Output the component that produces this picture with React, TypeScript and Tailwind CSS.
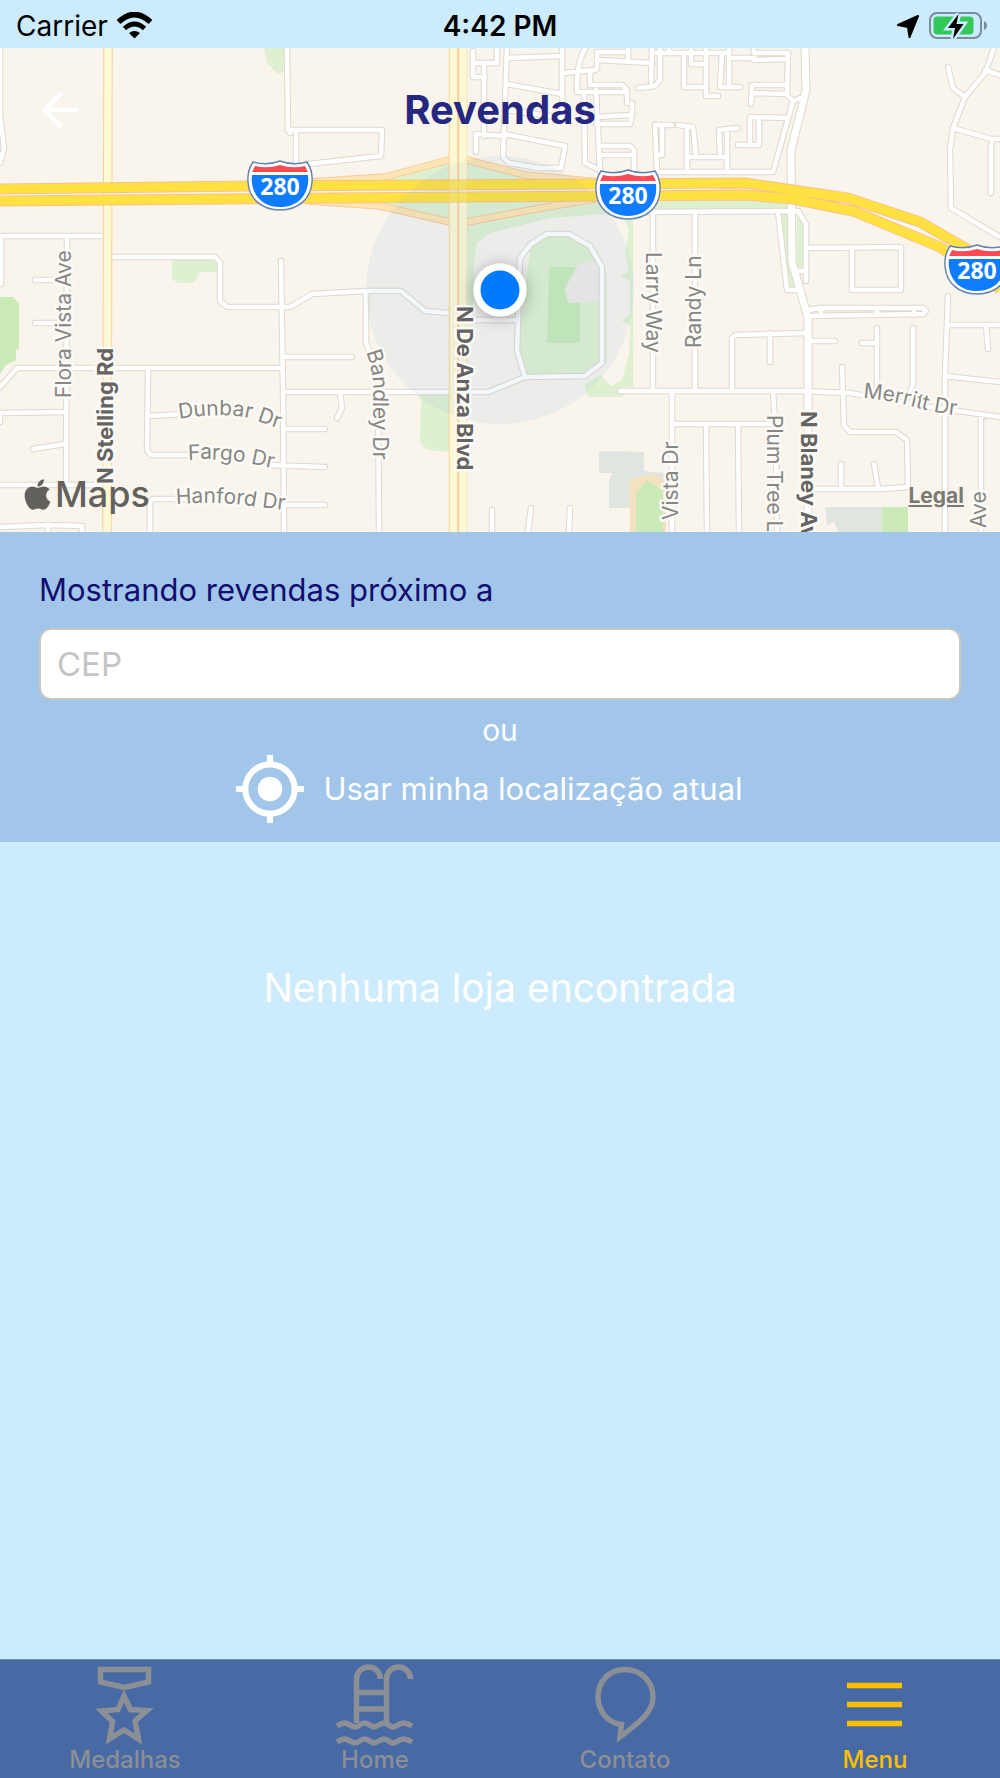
import type { ReactNode } from "react";
import { FaApple } from "react-icons/fa";
import { MdArrowBack, MdMyLocation } from "react-icons/md";

const STREETS = [
  // west side
  "M0 48 V115 L4 148 L0 163",
  "M0 236 H103 M67 236 L66 485 M1 236 V284 M35 280 H66 M35 323 H66",
  "M287 48 L288 129 L290 133 M288 130 H382 L381 156 L309 164 M296 130 V165",
  "M111 257 H215 L220 262 V301 L227 307 H290 L312 294 L366 291 H401 L425 311 L449 313",
  "M281 261 L283 390 L284 532 M283 357 H352 M283 392 H450 M340 392 L342 408 L337 418",
  "M0 387 L17 368 H283 M148 369 L147 450 L151 455 H190 M148 416 L184 414",
  "M0 422 V413 L66 412 M33 449 L65 444 M0 485 H104",
  "M150 532 V502 L153 499 H184 M0 527 L48 525 L82 526 V532 M48 525 V532",
  "M283 429 H325 M268 465 L325 467 M285 505 H325",
  "M366 291 V343 L378 370 L379 532",
  // stadium
  "M468 320 H516 M547 234 H569 L590 246 L602 267 V363 L585 376 L525 377 L517 350 L518 320 L520 258 L531 244 Z",
  "M525 377 L488 392 H467 M492 510 V532 M531 508 L528 532 M570 508 L569 532",
  // north centre
  "M473 51 V77 H485 M473 63 H497 V48 M484 63 V136 M476 152 V134 L505 136",
  "M507 48 L503 157 L509 163 L539 168 H561 L565 146 L504 134",
  "M507 58 L562 56 M507 84 L562 94 M507 110 L563 118 M562 48 V118 M562 73 L595 70",
  "M585 48 Q576 66 577 91 M577 92 H627 M597 52 H627 M597 60 L652 63 M597 52 V69 L590 72 V85 H622 L627 90 V103",
  "M628 48 V62 M652 48 L651 82 M660 48 V80 L655 86 L638 88 M584 95 L585 163 L600 170",
  "M596 90 L600 172 M594 117 L632 115 V103 M596 124 H630 L632 115 M600 146 H630 L634 150 V172 M600 155 H634",
  "M672 125 H655 L657 172 H773 L793 101 M656 155 H662 V125",
  "M652 53 H728 M669 48 V53 M684 53 V87 H705 M691 48 V64 H706 M706 48 V96 H718",
  "M722 53 L720 87 H740 M729 48 V87 M729 58 H755 M754 48 V53 H788 L787 95 L793 101 L803 97 M754 60 L788 59",
  "M751 104 L752 85 H787 M752 93 L787 94 M787 118 L750 117 V145 M759 117 V145 H738",
  "M678 125 L693 127 L696 155 M687 128 V170 M687 157 H727 M738 128 L719 130 L720 155 M727 130 V170",
  // north east
  "M994 48 L985 73 L965 97 L953 128 L950 150 L951 208 L1000 237 M985 70 L1000 75",
  "M948 67 L953 88 L965 97 M953 128 L991 139 H1000 M993 139 L991 146 V193",
  "M640 212 L798 211 L806 224 V281 M695 212 V391 M653 212 V391 M778 212 L787 290 H796",
  "M806 248 L901 247 V290 H852 V248 M797 271 H806",
  // south east
  "M808 310 L820 308 H923 L926 311 L923 314 L808 316 M821 308 V315 M877 308 V315 M914 308 V315",
  "M808 333 L735 335 L732 338 V390 M770 333 V362 M808 341 H835 M862 343 H877 M877 328 V388 M913 328 V384 L908 397",
  "M842 367 L844 425 L850 432 H896 L907 440 L908 487 L880 489 H812 M841 464 V488 M874 464 L878 488",
  "M620 391 H800 L850 393 L910 404 L1000 417 M948 296 L945 375 V532 M948 325 H1000 M986 325 L988 349 M945 376 L1000 382 M981 415 V532",
  "M672 391 V532 M672 424 H774 M706 424 L707 532 M738 424 L739 532 M773 391 L776 440 L777 532",
].join(" ");

const BLANEY = "M805 48 L806 90 L791 150 L792 262 L808 318 V532";
const RAMPS = "M310 182 L385 177 L449 160 H467 L525 175 L600 182 M310 201 L380 206 L450 222 H467 L530 210 L600 198";
const HIGHWAY = "M0 189 L250 186 L745 183 L793 190 L848 198 L920 222 L1000 268 M0 201 L330 198 L745 195 L793 199 L853 211 L940 247 L1000 289";

function Shield({ x, y }: { x: number; y: number }) {
  return (
    <g transform={`translate(${x} ${y})`}>
      <path
        d="M5 1 Q19 5 32 0 Q45 5 59 1 Q65 10 64 21 C63 38 50 49 32 49 S1 38 0 21 Q-1 10 5 1Z"
        fill="#fff"
        stroke="#6480b0"
        strokeWidth="1.4"
      />
      <path d="M7 5 Q19 8 32 4 Q45 8 57 5 L60 11 H4Z" fill="#ff4a55" />
      <path d="M4 14 H60 C62 32 51 46 32 46 S2 32 4 14Z" fill="#0f7cff" />
      <text x="32" y="34" textAnchor="middle" className="fill-white font-['Noto_Sans',sans-serif] text-[23px] font-bold">
        280
      </text>
    </g>
  );
}

function MapView() {
  return (
    <svg viewBox="0 48 1000 484" className="block h-auto w-full" aria-label="Mapa">
      <rect y="48" width="1000" height="484" fill="#f9f5ed" />

      <g fill="#dff0d0">
        <path d="M264 48 H284 V72 L278 74 L267 63Z" />
        <path d="M172 260 H215 L219 272 H200 L194 283 H178 L172 279Z" />
        <path d="M370 184 L450 160 H467 L550 184Z M370 202 L450 222 H467 L570 199Z" />
        <path d="M467 222 L560 203 L790 199 V210 L633 212 V387 H623 V397 H588 L584 385 L600 375 L612 386 L622 380 L629 355 L630 325 L621 320 L630 315 V281 L621 276 L629 271 L625 252 L629 229 L621 213 L550 218 L490 233 L477 243 L474 262 L473 318 H467Z" />
        <path d="M531 244 L547 234 H569 L590 246 L607 275 V363 L585 376 H525 L517 350Z" />
        <path d="M418 393 H450 V452 L427 450 L420 442 L421 400Z" />
        <path d="M780 214 H790 V240 L795 290 H788Z M797 213 L803 224 V267 H797Z" />
      </g>
      <g fill="#caebb8">
        <path d="M0 297 H13 L19 304 V349 L16 350 V360 L6 365 L0 374Z" />
        <path d="M549 267 H580 V343 H547Z M882 507 H908 V532 H882Z" />
      </g>
      <path d="M565 288 L578 265 L595 260 L601 266 V302 L568 303Z" fill="#efebe6" />
      <g fill="#e0e5df">
        <path d="M599 451 L644 452 V471 L665 473 V508 H609 V480 L612 473 H599Z" />
        <path d="M825 507 H882 V532 H838 L834 521 L827 526Z" />
      </g>
      <path d="M630 532 V479 L655 474 L666 482 V532Z" fill="#f4e1be" />
      <path d="M636 532 V493 L647 480 L663 491 V532Z" fill="#caebb8" />

      <g fill="none" strokeLinejoin="round" strokeLinecap="round">
        <path d={STREETS} stroke="#dfd8cd" strokeWidth="6.5" />
        <path d={BLANEY} stroke="#dfd8cd" strokeWidth="9" />
        <path d={STREETS} stroke="#fff" strokeWidth="4.5" />
        <path d={BLANEY} stroke="#fff" strokeWidth="7" />
        <path d={RAMPS} stroke="#f9c79a" strokeWidth="7.5" />
        <path d={RAMPS} stroke="#fde6b3" strokeWidth="5.5" />
      </g>
      <g fill="none">
        <path d="M108 48 L107 532" stroke="#fbcf9d" strokeWidth="9.5" />
        <path d="M108 48 L107 532" stroke="#fdf9d4" strokeWidth="7.5" />
        <path d="M458 48 V532" stroke="#fbcf9d" strokeWidth="18.5" />
        <path d="M453.5 48 V532 M463 48 V532" stroke="#fdf9d4" strokeWidth="7.5" />
        <path d={HIGHWAY} stroke="#f9c08f" strokeWidth="11" />
        <path d={HIGHWAY} stroke="#ffe141" strokeWidth="9" />
        <path d="M453.5 179 V207 M463 179 V207" stroke="#fdf9d4" strokeWidth="7.5" opacity=".2" />
      </g>

      <circle cx="500" cy="290" r="134" fill="#4a8fc8" opacity=".07" />

      <defs>
        <path id="dunbar" d="M179 419 Q222 412 249 418 L300 436" />
        <path id="fargo" d="M188 460 Q220 458 248 463 L300 474" />
        <path id="hanford" d="M176 504 Q220 501 250 506 L310 513" />
        <path id="bandley" d="M366 352 Q375 375 373 400 V480" />
        <path id="merritt" d="M863 398 Q890 400 918 408 T990 418" />
        <filter id="dot-shadow" x="-50%" y="-50%" width="200%" height="200%">
          <feDropShadow dx="0" dy="2" stdDeviation="8" floodOpacity=".3" />
        </filter>
      </defs>
      <g
        className="fill-[#878683] font-['Inter',sans-serif] text-[21px]"
        stroke="#fcfaf6"
        strokeWidth="5"
        strokeLinejoin="round"
        paintOrder="stroke"
      >
        <text transform="translate(71 398) rotate(-90)">Flora Vista Ave</text>
        <text><textPath href="#dunbar">Dunbar Dr</textPath></text>
        <text><textPath href="#fargo">Fargo Dr</textPath></text>
        <text><textPath href="#hanford">Hanford Dr</textPath></text>
        <text><textPath href="#bandley">Bandley Dr</textPath></text>
        <text><textPath href="#merritt">Merritt Dr</textPath></text>
        <text transform="translate(646 252) rotate(90)">Larry Way</text>
        <text transform="translate(701 348) rotate(-90)">Randy Ln</text>
        <text transform="translate(678 520) rotate(-90)">Vista Dr</text>
        <text transform="translate(767 415) rotate(90)">Plum Tree L</text>
        <text transform="translate(986 528) rotate(-90)">Ave</text>
        <g className="fill-[#656462] text-[22px] font-bold">
          <text transform="translate(113 484) rotate(-90)">N Stelling Rd</text>
          <text transform="translate(457 306) rotate(90)">N De Anza Blvd</text>
          <text transform="translate(801 411) rotate(90)">N Blaney Av</text>
        </g>
      </g>

      <Shield x={248} y={161} />
      <Shield x={596} y={170} />
      <Shield x={945} y={245} />

      <circle cx="500" cy="290" r="26.5" fill="#fff" filter="url(#dot-shadow)" />
      <circle cx="500" cy="290" r="19.5" fill="#007aff" />
    </svg>
  );
}

function StatusBar() {
  return (
    <header className="grid h-12 grid-cols-3 items-center px-4 pt-1 text-[28px] leading-8 text-black">
      <div className="flex items-center gap-2">
        <span>Carrier</span>
        <svg viewBox="0 0 37 28" className="h-7 w-[37px]" aria-hidden="true">
          <path d="M2.5 10 Q18.500 -5 34.500 10" fill="none" stroke="#000" strokeWidth="5.5" />
          <path d="M8.5 16.5 Q18.5 7.5 28.5 16.5" fill="none" stroke="#000" strokeWidth="5" />
          <path d="M13 21 Q18.5 17 24 21 L18.5 26.5Z" />
        </svg>
      </div>
      <span className="text-center font-semibold">4:42 PM</span>
      <div className="-mr-1 flex items-center justify-end gap-2">
        <svg viewBox="0 0 24 26" className="h-[26px] w-6" aria-hidden="true">
          <path d="M22 3 L2 12 L12 14 L13.5 24Z" stroke="#000" strokeWidth="2" strokeLinejoin="round" />
        </svg>
        <svg viewBox="0 0 60 28" className="h-7 w-[60px]" aria-hidden="true">
          <rect x="2" y="1" width="51" height="25" rx="7" fill="none" stroke="#7b8f98" strokeWidth="2" />
          <path d="M56 9 Q59 10.5 59 13.5 T56 18Z" fill="#7b8f98" />
          <rect x="5.5" y="4.5" width="40" height="18" rx="4" fill="#34c759" />
          <path d="M30.5 2 L20 16 H27 L25 27 L35.5 12 H28.5Z" stroke="#ccebfc" strokeWidth="5" />
          <path d="M30.5 2 L20 16 H27 L25 27 L35.5 12 H28.5Z" />
        </svg>
      </div>
    </header>
  );
}

const WAVE = "c3 -2 5 -3 8 -3 s7 4 10 4 s6 -4 10 -4 s6 4 9 4 s6 -4 10 -4 s6 4 9 4 s6 -4 10 -4 q4 0 9 3";

const tabs: { label: string; icon: ReactNode; active?: boolean }[] = [
  {
    label: "Medalhas",
    icon: (
      <>
        <path d="M15.5 9.5 H63.5 V22 L39.5 27.5 L15.5 22Z" />
        <path d="M39 36 L45.5 49.5 L62 50.5 L50 61 L53.5 79 L39 70 L24.5 79 L27.5 61.5 L16.5 51 L33 49.5Z" />
      </>
    ),
  },
  {
    label: "Home",
    icon: (
      <>
        <path d="M21.5 63 V19 a12 12 0 0 1 24 0 M51.5 63 V19 a12 12 0 0 1 24 0 M21.5 32.5 H51.5 M21.5 49 H51.5" />
        <path d={`M2 66 ${WAVE}`} />
        <path d={`M2 82 ${WAVE}`} />
      </>
    ),
  },
  {
    label: "Contato",
    icon: <path d="M36.5 64.500 C23 63 13 51 13 37 C13 21 24.5 9.5 40 9.5 S68 21 68 37 C68 52 55 62 35 77Z" />,
  },
  {
    label: "Menu",
    icon: <path d="M12 25.5 H67 M12 44.5 H67 M12 63.5 H67" />,
    active: true,
  },
];

export default function App() {
  return (
    <div className="flex min-h-screen flex-col bg-[#ccebfc] font-['Inter',sans-serif]">
      <StatusBar />

      <div className="relative overflow-hidden">
        <MapView />
        <div className="absolute inset-x-0 top-8 grid grid-cols-3 items-center px-8">
          <button type="button" aria-label="Voltar" className="w-fit text-white">
            <MdArrowBack size={56} />
          </button>
          <h1 className="text-center text-[40px] leading-[60px] font-bold text-[#262782]">Revendas</h1>
        </div>
        <div className="absolute bottom-5 left-5 flex items-center text-[36px] leading-9 font-medium text-[#62615c]">
          <FaApple size={35} />
          <span>Maps</span>
        </div>
        <a href="#legal" className="absolute right-9 bottom-6 text-[21px] leading-6 font-bold text-[#7b7974] underline">
          Legal
        </a>
      </div>

      <form className="flex flex-col bg-[#a1c6ea] px-[39px] pt-10">
        <label htmlFor="cep" className="text-[31px] leading-9 text-[#130d70]">
          Mostrando revendas próximo a
        </label>
        <input
          id="cep"
          type="text"
          placeholder="CEP"
          className="mt-5 h-[72px] w-full rounded-xl border-2 border-[#c8c8c8] bg-white px-4 text-[33px] text-gray-800 placeholder:text-[#c4c4c6]"
        />
        <span className="mt-3 text-center text-[30px] leading-9 text-white">ou</span>
        <button type="button" className="mt-1 mb-4 flex items-center gap-4 self-center pr-6 text-[31px] leading-9 text-white">
          <MdMyLocation size={74} />
          Usar minha localização atual
        </button>
      </form>

      <main className="flex-1 pt-30 text-center">
        <p className="text-[39px] leading-[52px] text-white">Nenhuma loja encontrada</p>
      </main>

      <nav className="grid grid-cols-4 border-t border-[#7891ac] bg-[#476aa4] pb-1.5">
        {tabs.map((tab) => (
          <a
            key={tab.label}
            href={`#${tab.label.toLowerCase()}`}
            className={`flex flex-col items-center text-[24px] leading-6 font-medium ${tab.active ? "text-[#ffbf00]" : "text-[#8c8f95]"}`}
          >
            <svg viewBox="0 0 80 88" className="h-[88px] w-20" fill="none" stroke="currentColor" strokeWidth="5.5" aria-hidden="true">
              {tab.icon}
            </svg>
            {tab.label}
          </a>
        ))}
      </nav>
    </div>
  );
}
